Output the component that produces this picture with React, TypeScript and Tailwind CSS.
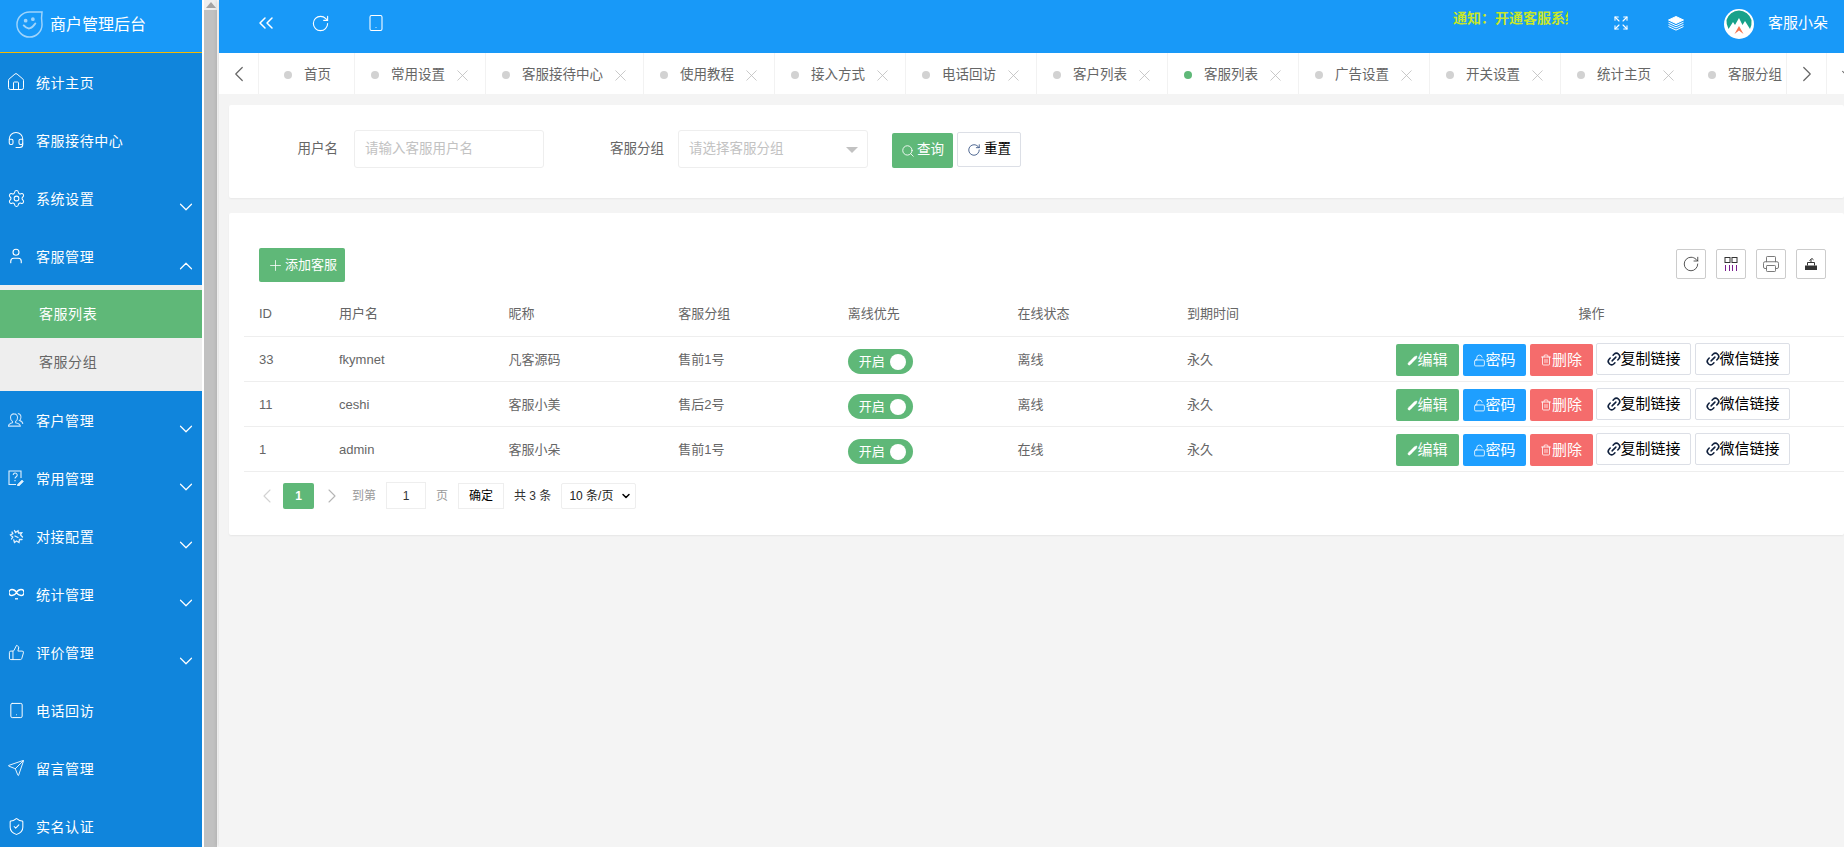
import React from "react";
import {
  ChevronsLeft, RotateCw, Tablet, House, Headset, Settings, User, ThumbsUp, Send, ShieldCheck,
  ChevronDown, ChevronUp, ChevronLeft, ChevronRight, X, Plus, Search, Printer, Expand, Pencil, LockOpen, Trash2, Link2,
} from "lucide-react";

const FONT = "font-['Liberation_Sans','Noto_Sans_CJK_SC',sans-serif]";

const tabs = [
  { t: "首页", w: "w-[96px]", close: false, first: true },
  { t: "常用设置", w: "w-[131px]", close: true },
  { t: "客服接待中心", w: "w-[158px]", close: true },
  { t: "使用教程", w: "w-[131px]", close: true },
  { t: "接入方式", w: "w-[131px]", close: true },
  { t: "电话回访", w: "w-[131px]", close: true },
  { t: "客户列表", w: "w-[131px]", close: true },
  { t: "客服列表", w: "w-[131px]", close: true, active: true },
  { t: "广告设置", w: "w-[131px]", close: true },
  { t: "开关设置", w: "w-[131px]", close: true },
  { t: "统计主页", w: "w-[131px]", close: true },
  { t: "客服分组", w: "w-[95px]", close: false },
];

const rows = [
  { id: "33", u: "fkymnet", n: "凡客源码", g: "售前1号", s: "离线" },
  { id: "11", u: "ceshi", n: "客服小美", g: "售后2号", s: "离线" },
  { id: "1", u: "admin", n: "客服小朵", g: "售前1号", s: "在线" },
];

function NavItem({ icon, label, arrow }: { icon: React.ReactNode; label: string; arrow?: "up" | "down" }) {
  return (
    <div className="relative h-[58px] flex items-center pl-[8px] text-white">
      <span className="w-[16px] h-[16px] flex items-center justify-center">{icon}</span>
      <span className="ml-[12px] pt-[2px] text-[14px] tracking-[0.55px]">{label}</span>
      {arrow === "down" && <ChevronDown size={22} strokeWidth={1.3} className="absolute left-[175px] top-[27px]" />}
      {arrow === "up" && <ChevronUp size={22} strokeWidth={1.3} className="absolute left-[175px] top-[28px]" />}
    </div>
  );
}

function Logo() {
  return (
    <svg width="27" height="27" viewBox="0 0 28 28" fill="none" stroke="#9fd4fb" strokeWidth="1.5" strokeLinecap="round">
      <path d="M27 1 H14 A13 13 0 1 0 27 14 Q26 7 27 1Z" />
      <path d="M8 15 Q14 22 20 13" strokeWidth="2" />
      <circle cx="10" cy="10" r="1.2" fill="#9fd4fb" />
      <circle cx="17.5" cy="8.5" r="1.2" fill="#9fd4fb" />
    </svg>
  );
}

function Avatar() {
  return (
    <svg width="30" height="30" viewBox="0 0 30 30">
      <circle cx="15" cy="15" r="15" fill="#fff" />
      <path d="M2.5 11 A13 13 0 0 1 27.5 11 Q28 16 26 20 L21 12 L18.5 16 L15 9 L11 16 L9 13 L4.5 20 Q2 15 2.5 11Z" fill="#17a18a" />
      <path d="M10.5 25 L15 17 L19.5 25 L15 21.5Z" fill="#f5734f" />
    </svg>
  );
}

function LayersIcon() {
  return (
    <svg width="16" height="15" viewBox="0 0 16 15" fill="none" stroke="#fff" strokeWidth="1">
      <path d="M8 0.5 L15.5 4 L8 7.5 L0.5 4Z" fill="#fff" />
      <path d="M0.5 6.2 L8 9.7 L15.5 6.2" />
      <path d="M0.5 8.4 L8 11.9 L15.5 8.4" />
      <path d="M0.5 10.6 L8 14.1 L15.5 10.6" />
    </svg>
  );
}

function UsersIcon() {
  return (
    <svg width="17" height="16" viewBox="0 0 17 16" fill="none" stroke="#cfe6fb" strokeWidth="1.1">
      <path d="M6.5 1.5a3.6 3.6 0 0 1 3.6 4c0 2-1 3.4-2 4v1.3c3 .6 5 1.7 5 3.7H.5c0-2 2-3.1 4.2-3.7V9.5c-1-.6-2-2-2-4a3.6 3.6 0 0 1 3.8-4z" />
      <path d="M10.5 1c2.300 .3 3.600 2.300 3.200 4.600-.2 1.400-.9 2.500-1.500 3 1.900.5 3.500 1.600 3.500 3.700" />
    </svg>
  );
}

function FaqIcon() {
  return (
    <svg width="16" height="16" viewBox="0 0 16 16" fill="none" stroke="#e3f1fd" strokeWidth="1.1">
      <path d="M8 14.500H1V1h12v7" />
      <path d="M5.200 5a2 2 0 1 1 3 1.800c-.8.5-1.200.9-1.200 1.800M7 10v1.200" />
      <path d="M9.500 14.500 L14 10 L15.500 11.500 L11 16 H9.500Z" fill="#e3f1fd" strokeWidth="0.6" />
    </svg>
  );
}

function LinkIcon() {
  return (
    <svg width="15" height="15" viewBox="0 0 15 15" fill="none" stroke="#e3f1fd" strokeWidth="1.3" strokeLinecap="round">
      <path d="M5.500 1.500 L6.500 3.500 L9 1.800 L9.500 4 L12.800 3.800 L11.500 6 L13.500 8" />
      <path d="M13 10.500 L10.500 10.500 L10 13.500 L7.500 12 L5.500 13.500 L4.800 11" />
      <path d="M2.500 10 L3.800 8 L1.500 6 L3.800 4.800 L3 3" />
      <path d="M6 7 L9 8.500" />
    </svg>
  );
}

function LoopIcon() {
  return (
    <svg width="15" height="12" viewBox="0 0 15 12" fill="none" stroke="#fff" strokeWidth="1.3">
      <path d="M7.500 4.500 C6 2 4.500 1.500 3 1.500 A3 3 0 0 0 3 7.500 C4.500 7.500 6 7 7.500 4.500 C9 2 10.500 1.500 12 1.500 A3 3 0 0 1 12 7.500 C10.500 7.500 9 7 7.500 4.500Z" />
      <path d="M6 10.800H9" />
    </svg>
  );
}

function ActionBtn({ color, icon, label }: { color: string; icon: React.ReactNode; label: string }) {
  return (
    <button className={`${color} w-[63px] h-[32px] mt-[2px] rounded-[2px] text-white text-[15px] flex items-center justify-center`}>
      {icon}
      {label}
    </button>
  );
}

function LinkBtn({ label }: { label: string }) {
  return (
    <button className="w-[95px] h-[32px] border border-[#dcdfe6] rounded-[2px] bg-white text-black text-[15px] flex items-center justify-center">
      <Link2 size={16} strokeWidth={2.3} className="-rotate-45 shrink-0 -mr-[1px] text-[#10203c]" />
      {label}
    </button>
  );
}

function ToolBtn({ children }: { children: React.ReactNode }) {
  return (
    <div className="w-[30px] h-[30px] border border-[#ccc] rounded-[2px] flex items-center justify-center text-[#333]">
      {children}
    </div>
  );
}

const headers = ["ID", "用户名", "昵称", "客服分组", "离线优先", "在线状态", "到期时间"];
const gridCols = "grid grid-cols-[80px_169.6px_169.6px_169.6px_169.6px_169.6px_169.6px_500px]";

export default function App() {
  return (
    <div className={`${FONT} flex w-[1844px] h-[847px] overflow-hidden bg-white`}>
      {/* Sidebar */}
      <aside className="w-[202px] shrink-0 h-[847px] overflow-hidden bg-[#1085dc]">
        <div className="h-[53px] bg-[#1899f8] border-b border-[#f5b800] flex items-center pl-[16px] pb-[3px] text-white">
          <Logo />
          <span className="ml-[7px] text-[16px]">商户管理后台</span>
        </div>
        <NavItem icon={<House size={20} strokeWidth={1.2} className="shrink-0" />} label="统计主页" />
        <NavItem icon={<Headset size={18} strokeWidth={1.4} className="shrink-0" />} label="客服接待中心" />
        <NavItem icon={<Settings size={19} strokeWidth={1.3} className="shrink-0" />} label="系统设置" arrow="down" />
        <NavItem icon={<User size={18} strokeWidth={1.5} className="shrink-0" />} label="客服管理" arrow="up" />
        <div className="bg-[#eeeeee] h-[106px] pt-[5px]">
          <div className="h-[48px] bg-[#5fb878] text-white text-[14px] tracking-[0.55px] pl-[39px] flex items-center">客服列表</div>
          <div className="h-[53px] pb-[5px] text-[#666] text-[14px] tracking-[0.55px] pl-[39px] flex items-center">客服分组</div>
        </div>
        <NavItem icon={<UsersIcon />} label="客户管理" arrow="down" />
        <NavItem icon={<FaqIcon />} label="常用管理" arrow="down" />
        <NavItem icon={<LinkIcon />} label="对接配置" arrow="down" />
        <NavItem icon={<LoopIcon />} label="统计管理" arrow="down" />
        <NavItem icon={<ThumbsUp size={17} strokeWidth={1.3} className="shrink-0" />} label="评价管理" arrow="down" />
        <NavItem icon={<Tablet size={17} strokeWidth={1.4} className="shrink-0" />} label="电话回访" />
        <NavItem icon={<Send size={18} strokeWidth={1.2} className="shrink-0" />} label="留言管理" />
        <NavItem icon={<ShieldCheck size={19} strokeWidth={1.3} className="shrink-0" />} label="实名认证" />
      </aside>

      {/* Page scrollbar */}
      <div className="w-[17px] shrink-0 pl-[2px] pr-[2px] bg-white">
        <div className="h-[10px] bg-[#eee] flex justify-center pt-[2px]">
          <div className="w-0 h-0 border-x-[5px] border-x-transparent border-b-[6px] border-b-[#a3a3a3]" />
        </div>
        <div className="h-[837px] bg-[#c1c1c1]" />
      </div>

      {/* Main */}
      <main className="flex-1 min-w-0 h-[847px] flex flex-col bg-[#f4f4f4] shadow-[-2px_0_4px_rgba(0,0,0,0.12)] z-10 overflow-hidden">
        <header className="h-[53px] shrink-0 bg-[#1899f8] text-white flex items-center pl-[35px] pb-[7px]">
          <ChevronsLeft size={24} strokeWidth={1.5} />
          <RotateCw size={19} strokeWidth={1.4} className="ml-[33px]" />
          <Tablet size={18} strokeWidth={1.4} className="ml-[37px]" />
          <div className="ml-auto flex items-center h-full">
            <div className="w-[115px] overflow-hidden whitespace-nowrap text-[14px] font-bold text-[#c6e62a] -mt-[10px]">通知：开通客服系统</div>
            <Expand size={16} strokeWidth={1.6} className="ml-[45px]" />
            <span className="ml-[39px]"><LayersIcon /></span>
            <span className="ml-[40px] mt-[2px]"><Avatar /></span>
            <span className="ml-[14px] mr-[16px] mt-[1px] text-[15px]">客服小朵</span>
          </div>
        </header>

        <nav className="h-[41px] shrink-0 bg-white flex text-[#666] text-[13.5px]">
          <div className="w-[40px] shrink-0 flex items-center justify-center border-r border-[#f2f2f2]">
            <ChevronLeft size={26} strokeWidth={1.1} />
          </div>
          {tabs.map((tab) => (
            <div key={tab.t} className={`${tab.w} shrink-0 border-r border-[#f2f2f2] flex items-center pt-[3px] whitespace-nowrap overflow-hidden ${tab.first ? "pl-[25px]" : "pl-[16px]"}`}>
              <span className={`w-[8px] h-[8px] rounded-full shrink-0 ${tab.active ? "bg-[#5fb878]" : "bg-[#d2d2d2]"}`} />
              <span className="ml-[12px]">{tab.t}</span>
              {tab.close && <X size={19} strokeWidth={1} className="ml-[8px] text-[#bbb] shrink-0" />}
            </div>
          ))}
          <div className="w-[40px] shrink-0 flex items-center justify-center border-r border-[#f2f2f2]">
            <ChevronRight size={26} strokeWidth={1.1} />
          </div>
          <div className="flex-1 flex items-center pl-[10px] overflow-hidden">
            <ChevronDown size={22} strokeWidth={1.1} className="shrink-0" />
          </div>
        </nav>

        <div className="flex-1 pl-[10px] pt-[11px] text-[#666]">
          {/* Search card */}
          <section className="h-[93px] bg-white rounded-[2px] shadow-[0_1px_2px_rgba(0,0,0,0.05)] flex items-start pt-[25px] text-[13.5px]">
            <label className="w-[109px] h-[38px] flex items-center justify-end">用户名</label>
            <div className="ml-[16px] w-[190px] h-[38px] border border-[#eee] rounded-[3px] flex items-center pl-[10px] text-[#c2c2c2]">请输入客服用户名</div>
            <label className="w-[120px] h-[38px] flex items-center justify-end">客服分组</label>
            <div className="ml-[14px] w-[190px] h-[38px] border border-[#eee] rounded-[3px] flex items-center pl-[10px] text-[#c2c2c2] relative">
              请选择客服分组
              <span className="absolute right-[9px] top-[16px] w-0 h-0 border-x-[6px] border-x-transparent border-t-[6px] border-t-[#c2c2c2]" />
            </div>
            <button className="ml-[24px] mt-[3px] w-[61px] h-[35px] bg-[#5fb878] rounded-[2px] text-white flex items-center justify-center">
              <Search size={14} strokeWidth={1.5} />
              <span className="ml-[2px]">查询</span>
            </button>
            <button className="ml-[4px] mt-[2px] w-[64px] h-[35px] bg-white border border-[#dcdfe6] rounded-[2px] text-black flex items-center justify-center">
              <RotateCw size={14} strokeWidth={1.4} className="text-[#2c4a7c]" />
              <span className="ml-[3px]">重置</span>
            </button>
          </section>

          {/* Table card */}
          <section className="mt-[15px] h-[322px] bg-white rounded-[2px] shadow-[0_1px_2px_rgba(0,0,0,0.06)] pt-[35px] text-[13px]">
            <div className="flex items-start justify-between pl-[30px] pr-[18px]">
              <button className="w-[86px] h-[34px] bg-[#5fb878] rounded-[2px] text-white text-[13px] flex items-center justify-center">
                <Plus size={17} strokeWidth={1.1} />
                <span className="ml-[1px]">添加客服</span>
              </button>
              <div className="flex gap-[10px] mt-[1px]">
                <ToolBtn><RotateCw size={18} strokeWidth={1.1} /></ToolBtn>
                <ToolBtn>
                  <svg width="14" height="14" viewBox="0 0 14 14" fill="none" strokeWidth="1">
                    <rect x="1" y="0.5" width="5" height="5" stroke="#333" />
                    <rect x="8" y="0.5" width="5" height="5" stroke="#333" />
                    <path d="M1.5 8v6M5.500 8v6M8.500 8v6M12.500 8v6" stroke="#7a1f8f" />
                  </svg>
                </ToolBtn>
                <ToolBtn><Printer size={18} strokeWidth={1.3} className="text-[#777]" /></ToolBtn>
                <ToolBtn>
                  <svg width="14" height="14" viewBox="0 0 14 14">
                    <path d="M1 13V8.500H13V13Z" fill="#333" />
                    <path d="M3.500 8.500V5.500H10.500V8.500" fill="none" stroke="#333" strokeWidth="1" />
                    <path d="M7 6V2.500M5.500 3.500L8 1.500L9.500 2.800" fill="none" stroke="#333" strokeWidth="1" />
                  </svg>
                </ToolBtn>
              </div>
            </div>

            <div className="ml-[15px] mt-[8px]">
              <div className={`${gridCols} h-[47px] items-center border-b border-[#eee]`}>
                {headers.map((h) => (
                  <div key={h} className="pl-[15px] pt-[2px]">{h}</div>
                ))}
                <div className="text-center pt-[2px]">操作</div>
              </div>
              {rows.map((r) => (
                <div key={r.id} className={`${gridCols} h-[45px] items-center border-b border-[#eee]`}>
                  <div className="pl-[15px] pt-[1px]">{r.id}</div>
                  <div className="pl-[15px] pt-[1px]">{r.u}</div>
                  <div className="pl-[15px] pt-[1px]">{r.n}</div>
                  <div className="pl-[15px] pt-[1px]">{r.g}</div>
                  <div className="pl-[15px] pt-[5px]">
                    <div className="w-[65px] h-[25px] rounded-full bg-[#5fb878] text-white flex items-center pl-[11px]">
                      开启
                      <span className="ml-[5px] w-[16px] h-[16px] rounded-full bg-white" />
                    </div>
                  </div>
                  <div className="pl-[15px] pt-[1px]">{r.s}</div>
                  <div className="pl-[15px] pt-[1px]">永久</div>
                  <div className="flex items-center justify-start pl-[54px] gap-[4px]">
                    <ActionBtn color="bg-[#5fb878]" icon={<Pencil size={11} fill="currentColor" strokeWidth={1} className="-scale-x-100 -rotate-90" />} label="编辑" />
                    <ActionBtn color="bg-[#1e9fff]" icon={<LockOpen size={13} strokeWidth={1.5} />} label="密码" />
                    <ActionBtn color="bg-[#f56c6c]" icon={<Trash2 size={12} strokeWidth={1.6} />} label="删除" />
                    <span className="-ml-[1px]"><LinkBtn label="复制链接" /></span>
                    <LinkBtn label="微信链接" />
                  </div>
                </div>
              ))}
            </div>

            {/* Pagination */}
            <div className="ml-[15px] mt-[10px] flex items-center pl-[14px] h-[27px] text-[12px] text-[#999]">
              <ChevronLeft size={24} strokeWidth={1.1} className="text-[#d2d2d2] -ml-[3px]" />
              <div className="ml-[4px] w-[31px] h-[26px] rounded-[2px] bg-[#5fb878] text-white font-bold flex items-center justify-center">1</div>
              <ChevronRight size={24} strokeWidth={1.1} className="ml-[6px] text-[#b5b5b5]" />
              <span className="ml-[8px]">到第</span>
              <div className="ml-[10px] w-[40px] h-[27px] border border-[#eee] text-[#333] flex items-center justify-center">1</div>
              <span className="ml-[10px]">页</span>
              <div className="ml-[10px] w-[46px] h-[26px] border border-[#eee] text-black flex items-center justify-center">确定</div>
              <span className="ml-[10px] text-[#333]">共 3 条</span>
              <div className="ml-[10px] w-[75px] h-[26px] border border-[#eee] rounded-[2px] text-[#222] flex items-center pl-[7px] relative">
                10 条/页
                <ChevronDown size={12} strokeWidth={3} className="absolute right-[3px] top-[6px] text-black" />
              </div>
            </div>
          </section>
        </div>
      </main>
    </div>
  );
}
